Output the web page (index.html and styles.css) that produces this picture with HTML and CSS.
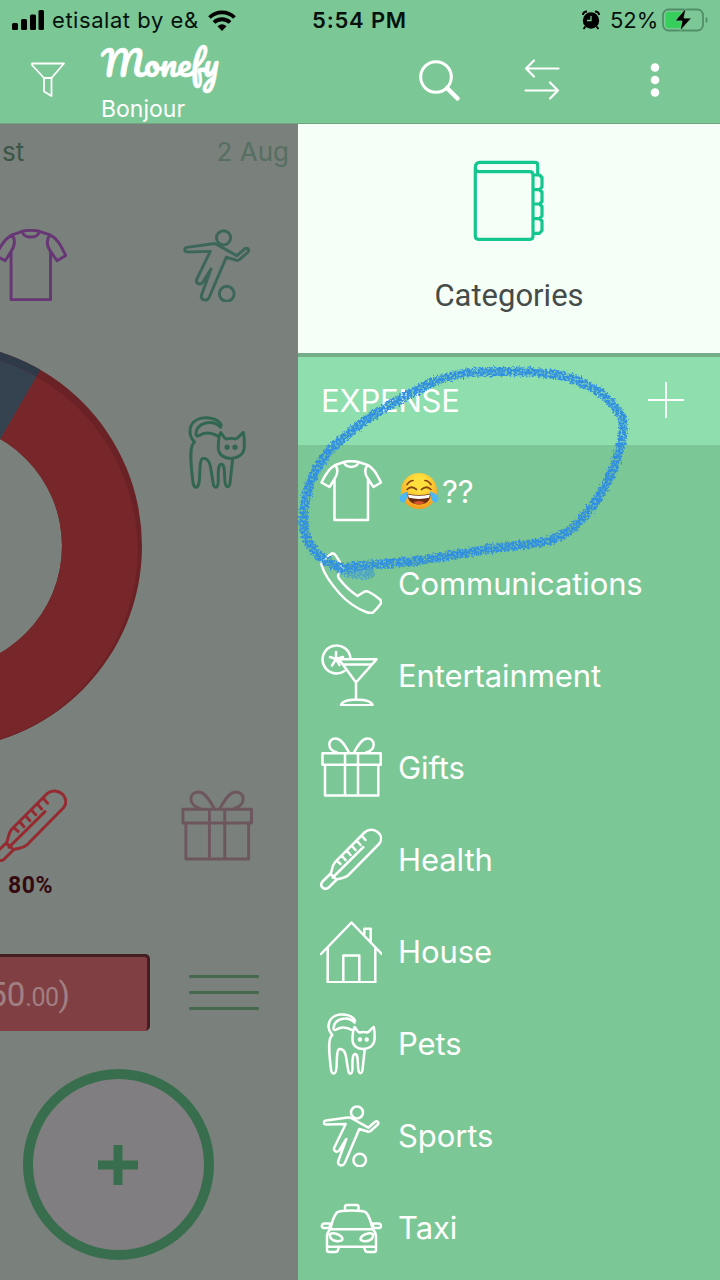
FILE: index.html
```html
<!DOCTYPE html>
<html lang="en">
<head>
<meta charset="utf-8">
<title>Monefy</title>
<link rel="stylesheet" href="styles.css">
</head>
<body>
<svg class="sprite" aria-hidden="true">
  <symbol id="shirt" viewBox="0 0 62 62">
    <path d="M24 2 15.500 5C9 8 5 15 1.500 22.500L9.500 27l5-8v41H48V19l5.500 8 7.500-4.500C57 15 54 8 47.500 5L38.500 2C34 1 28 1 24 2ZM24 2c1 6.500 13.500 6.500 14.500 0M15.500 5c2.500 4 2.500 9-1 14M47.500 5c-3 4-3 9 .5 14"/>
  </symbol>
  <symbol id="phone" viewBox="0 0 62 62">
    <path d="M11 2q2-1.500 4 .5 5 6.500 7.500 13 .5 2-1.500 3.500l-2.500 3.500q-1 2 .5 4Q27 37 37.500 44l5.500-3.500q3-2 6-.5 6 3 11 7.500 2 2 .5 4.500-3.500 5-7.500 8.500-3 1-7-.5Q31 54 20 42 5 25 1.500 13 1 10 3 8.500Z"/>
  </symbol>
  <symbol id="cocktail" viewBox="0 0 62 62">
    <path d="M30.500 14A14 14 0 1 0 24.500 27M16 8v6.500M16 15l-6-2M16 15l7-2M16 15l-4 6.500M16 15l3.500 6M19 15.300h37.500L36 38.500ZM23 20.500h29M36 38.500V55M21 61.200q1.500-5.200 15.500-5.600Q51 56 52.500 61.200Z"/>
  </symbol>
  <symbol id="gift" viewBox="0 0 62 62">
    <path d="M2.500 17.200h58.200v11.600H2.500ZM5 28.800v30.700h53.300V28.800M25 17.200v42.300M38 17.200v42.300M29 16.500C25 9 21 2.500 15.500 2.500 7.500 2.500 6.500 14 17 16.500M34 16.500C38 9 42 2.500 47.500 2.500 55.500 2.500 56.500 14 46 16.500"/>
  </symbol>
  <symbol id="thermo" viewBox="0 0 62 62">
    <path d="M45 4c8-7 21 3 14 12L28.300 47.200c-4 3.500-7 2.800-11.600 4.300l-8 8C4 63-1 58 2.500 53.500l8.200-8c2-4 .8-7 4.300-11.300ZM10.500 46l6 5.500M12.700 49.500 43.300 19.200M17 33l3.500 3M22 28l3.500 4M27 23l3.500 4M32 18l3.500 4M37 13l3.500 4M42 8l3.500 4"/>
  </symbol>
  <symbol id="house" viewBox="0 0 62 62">
    <path d="M1 33 31.500 1.500 61.700 33M7.700 27v34.200h47.600V27M23.300 61V34.500h16V61M44.300 13V7.800h6.400v13"/>
  </symbol>
  <symbol id="cat" viewBox="0 0 62 62">
    <path d="M35 7.500C31-1 8-2 8.500 14c.2 4 2 6 3.800 8.200-5 3-3 20-1.500 32.300.5 8 5 8 5.700 0 .5-7 0-18 3-18.500 7-.5 6.500 10 8.500 20 .5 6.500 4.300 6 4.500-.5 0-7-.5-14 2.500-14.500 3.500 0 2.500 8 3.200 14.500.5 6.500 4.300 6 4.500-.5l2-18.300M34.500 9.500C27 2 14 6 13.500 15c0 2 1 2.500 3 1.500 6-4 12-1.500 16.500 1M39.300 19.500C37 18.500 36.500 16 34.500 14c-2 4-2 8-2 13 0 12 21 12 22 0 .3-5 .5-9-.8-13-3 2-4 5-6.500 5.500q-3.500-1-7.900 0Z"/>
    <circle cx="40" cy="26.500" r="1"/><circle cx="46.700" cy="26.500" r="1"/>
  </symbol>
  <symbol id="sport" viewBox="0 0 62 62">
    <circle cx="37" cy="7.500" r="6"/><circle cx="39.700" cy="55" r="6.300"/>
    <path d="M6 15.600 28 12.500q2-.3 4 1L48.300 22.700 55 16.800c2.500-1.500 4.500 1 2.500 3L50.500 26q-1.500 1-3 .5l-8.200-2.500-14.500 34c-2 4-8 2.500-6.500-2l8-22-6.500 10.500c-2 4-7 2-5.500-2L25.700 19 6.500 19.500c-3.500 0-3-3.500-.5-3.900Z"/>
  </symbol>
  <symbol id="taxi" viewBox="0 0 62 62">
    <path d="M25 13.300V10q0-2 2-2h9.500q2 0 2 2v3.300M10.500 31.500C12 25 13.500 19 17 15.500q2-2 14.500-2t14.500 2C49.500 19 51 25 52.500 31.500M10 31H3.500c-3-1-1.500-4.500 1-4.500H10ZM53 31h6.500c3-1 1.500-4.500-1-4.500H53ZM10 32.300h43M10 32.300Q6.500 36 7 40v9.700h49V40q.5-4-3-7.700M7 49.700V53q0 2 2 2h6.500q2 0 2.500-2l1-3.300M56 49.700V53q0 2-2 2h-6.500q-2 0-2.500-2l-1-3.300M10 37c4-2 12 1 12.500 5 0 3-9 3-11.500-.5Q9.500 39 10 37ZM53 37c-4-2-12 1-12.500 5 0 3 9 3 11.500-.5Q53.500 39 53 37Z"/>
  </symbol>
</svg>

<div class="phone-screen">
  <div class="status">
    <svg class="signal" viewBox="0 0 32 20"><rect x="0" y="13" width="6" height="7" rx="1.500"/><rect x="9" y="9" width="6" height="11" rx="1.500"/><rect x="18" y="4.500" width="6" height="15.500" rx="1.500"/><rect x="26.500" y="0" width="5.500" height="20" rx="1.500"/></svg>
    <span class="carrier">etisalat by e&amp;</span>
    <svg class="wifi" viewBox="0 0 28 21"><path d="M1.500 7.500a18 18 0 0 1 25 0M6 12.500a11.500 11.500 0 0 1 16 0"/><path class="wifi-dot" d="M9.500 16.200q4.500-3.800 9 0L14 21Z"/></svg>
    <span class="time">5:54 PM</span>
    <svg class="alarm" viewBox="0 0 18 20"><path class="ear" d="M1 5Q1 1.500 5 1.500M17 5Q17 1.500 13 1.500M3.500 16.500 1.500 19M14.500 16.500l2 2.500"/><circle cx="9" cy="10.500" r="8.200"/><path class="hand" d="M9 6v4.500H5"/></svg>
    <span class="percent">52%</span>
    <svg class="battery" viewBox="0 0 46 24"><rect class="shell" x="1" y="1.500" width="40" height="21" rx="5.500"/><path class="charge" d="M6.500 4H19v16H6.500Q3.500 20 3.500 17V7Q3.500 4 6.500 4Z"/><path class="shell" d="M44.500 9.500v5"/><path class="bolt" d="M24 0 13 13h7l-2 10L29.500 10H22Z"/></svg>
  </div>

  <header class="toolbar">
    <svg class="funnel" viewBox="0 0 34 36"><path d="M1 1.500h32L20.500 16v18L13 29.500V16L1 3ZM13 16h7.500"/></svg>
    <div class="brand">
      <div class="logo">Monefy</div>
      <div class="account">Bonjour</div>
    </div>
    <svg class="search" viewBox="0 0 42 42"><circle cx="17" cy="17" r="15.300"/><path d="m28 28 10.500 10.500"/></svg>
    <svg class="swap" viewBox="0 0 36 42"><path d="M34.500 9.500H2M10 1.500 2 9.500l8 8M1.500 31.500H34M26 23.500l8 8-8 8"/></svg>
    <svg class="more" viewBox="0 0 10 34"><circle cx="5" cy="4.500" r="4.300"/><circle cx="5" cy="17" r="4.300"/><circle cx="5" cy="29.500" r="4.300"/></svg>
  </header>

  <main class="content">
    <section class="overview">
      <svg class="donut" viewBox="0 0 298 410">
        <defs>
          <clipPath id="ring"><path clip-rule="evenodd" d="M-265 206a203.500 203.500 0 0 1 407 0a203.500 203.500 0 0 1-407 0ZM-185 206a123.500 123.500 0 0 0 247 0a123.500 123.500 0 0 0-247 0Z"/></clipPath>
          <clipPath id="face"><circle cx="-61.500" cy="210" r="199"/></clipPath>
        </defs>
        <g clip-path="url(#ring)">
          <path class="red-rim" d="M0 0h298v410H0Z"/><path class="blue-rim" d="M-61.500 206 61 -6H0Z"/>
          <g clip-path="url(#face)"><path class="red" d="M0 0h298v410H0Z"/><path class="blue" d="M-61.500 206 61 -6H0Z"/></g>
        </g>
      </svg>
      <div class="dates"><span>st</span><span class="next">2 Aug</span></div>
      <div class="tiles first">
        <svg class="tile purple"><use href="#shirt"/></svg>
        <svg class="tile teal"><use href="#sport"/></svg>
      </div>
      <div class="tiles second">
        <svg class="tile green"><use href="#cat"/></svg>
      </div>
      <div class="tiles third">
        <svg class="tile crimson"><use href="#thermo"/></svg>
        <svg class="tile mauve"><use href="#gift"/></svg>
      </div>
      <div class="share">80%</div>
      <div class="balance-row">
        <div class="balance">50<small>.00</small>)</div>
        <div class="lines"><i></i><i></i><i></i></div>
      </div>
      <div class="add"><svg viewBox="0 0 40 40"><path d="M20 0v40M0 20h40"/></svg></div>
    </section>

    <aside class="drawer">
      <div class="categories">
        <svg class="book" viewBox="0 0 72 82"><path d="M2.300 8V76q0 3.300 3.300 3.300H57q3 0 3-3.300V15q0-3.300-3.300-3.300H7Q2.300 11.700 2.300 8 2.300 2.300 7 2.300H62q2.700 0 2.700 2.700v9.500M60 15h6.500l2.500 2.500v9.500l-2.500 2.700H60M66.500 29.700 69 32v9.500L66.500 44H60M66.500 44l2.500 2.500V56l-2.500 2.700H60M66.500 58.700 69 61v9.500l-2.500 2.800H60"/></svg>
        <div class="categories-label">Categories</div>
      </div>
      <div class="section-head">
        <span>EXPENSE</span>
        <svg class="plus" viewBox="0 0 38 38"><path d="M19 1v36M1 19h36"/></svg>
      </div>
      <ul class="list">
        <li><svg class="icon"><use href="#shirt"/></svg>
          <svg class="joy" viewBox="0 0 40 40" role="img" aria-label="Face with tears of joy">
            <defs><radialGradient id="skin" cx=".5" cy=".3" r=".7"><stop offset=".3" stop-color="#ffdf3d"/><stop offset="1" stop-color="#f79a1c"/></radialGradient></defs>
            <circle cx="20" cy="20" r="18" fill="url(#skin)"/>
            <path d="M8 22.500q12 3 24 0Q31 33.500 20 33.500T8 22.500Z" fill="#6b2d10"/><path d="M9 23.500q11 2.700 22 0l-.8 3.300q-10.200 2.200-20.400 0Z" fill="#fff"/>
            <path d="M14 31.800q6-3.500 12 0-6 3-12 0Z" fill="#d9552f"/>
            <path d="M8 18.500q4.500-4.500 9.500 0M22.500 18.500q5-4.500 9.500 0M8 13.500q3-4 6-4M26 9.500q3 0 6 4" fill="none" stroke="#85450f" stroke-width="1.700" stroke-linecap="round"/>
            <path d="M9 20.500q-8 2-8.500 7 .5 5 5 3.500Q8.500 29 9 20.500ZM31 20.500q8 2 8.500 7-.5 5-5 3.500Q31.500 29 31 20.500Z" fill="#4db8f2"/>
          </svg><span>??</span></li>
        <li><svg class="icon"><use href="#phone"/></svg><span>Communications</span></li>
        <li><svg class="icon"><use href="#cocktail"/></svg><span>Entertainment</span></li>
        <li><svg class="icon"><use href="#gift"/></svg><span>Gifts</span></li>
        <li><svg class="icon"><use href="#thermo"/></svg><span>Health</span></li>
        <li><svg class="icon"><use href="#house"/></svg><span>House</span></li>
        <li><svg class="icon"><use href="#cat"/></svg><span>Pets</span></li>
        <li><svg class="icon"><use href="#sport"/></svg><span>Sports</span></li>
        <li><svg class="icon"><use href="#taxi"/></svg><span>Taxi</span></li>
      </ul>
    </aside>
  </main>

  <svg class="scribble" viewBox="298 350 422 250">
    <defs>
      <filter id="crayon" x="-5%" y="-5%" width="110%" height="110%" color-interpolation-filters="sRGB">
        <feTurbulence type="fractalNoise" baseFrequency=".45" numOctaves="2" seed="4" result="n"/>
        <feDisplacementMap in="SourceGraphic" in2="n" scale="7" xChannelSelector="R" yChannelSelector="G" result="d"/>
        <feColorMatrix in="n" type="matrix" values="0 0 0 0 0  0 0 0 0 0  0 0 0 0 0  0 0 3 0 -.6" result="m"/>
        <feComposite in="d" in2="m" operator="in"/>
        <feGaussianBlur stdDeviation=".45"/>
      </filter>
    </defs>
    <g filter="url(#crayon)">
      <path d="M343 568C322 561 305 548 303 525C301 495 312 468 331 447C352 426 385 405 418 388C438 377 455 372 480 371C505 370 527 370 551 373C585 378 609 396 619 413C626 425 620 445 614 463C609 479 587 518 565 532C550 540 542 542 520 544C480 548 450 555 420 559C395 563 370 563 343 567"/>
      <path class="smudge" d="M341 569Q352 575 370 573"/>
    </g>
  </svg>
</div>
</body>
</html>
```
FILE: styles.css
```css
* { box-sizing: border-box; }
body { margin: 0; font-family: Inter, "Liberation Sans", sans-serif; }
svg { display: block; fill: none; flex: none; overflow: visible; }
.sprite { position: absolute; width: 0; height: 0; overflow: hidden; }
.phone-screen { position: relative; width: 720px; height: 1280px; overflow: hidden; display: flex; flex-direction: column; background: #7cc796; }

.status { height: 40px; padding-left: 12px; display: flex; align-items: center; color: #06120b; font-size: 21px; white-space: nowrap; }
.status svg { fill: #000; }
.signal { width: 32px; height: 20px; }
.carrier { width: 147px; margin-left: 8px; letter-spacing: .55px; font-size: 22px; line-height: 24px; }
.status .wifi { width: 28px; height: 21px; margin-left: 9px; fill: none; stroke: #000; stroke-width: 3.800; }
.wifi .wifi-dot { fill: #000; stroke: none; }
.time { width: 95px; margin-left: 76px; font-weight: 600; font-size: 22px; letter-spacing: .8px; }
.alarm { width: 18px; height: 20px; margin-left: 175px; }
.alarm circle { fill: #000; }
.alarm .ear { fill: none; stroke: #000; stroke-width: 2; }
.alarm .hand { fill: none; stroke: #7cc796; stroke-width: 1.300; }
.percent { width: 48px; margin-left: 10px; font-size: 22px; }
.battery { width: 46px; height: 24px; margin-left: 4px; }
.battery .shell { fill: none; stroke: #508f66; stroke-width: 1.800; }
.battery .charge { fill: #36cf5c; }
.battery .bolt { stroke: #7cc796; stroke-width: .8; }

.toolbar { height: 84px; display: flex; align-items: flex-start; padding-left: 31px; border-bottom: 1px solid #6fa581; color: #fff; }
.toolbar svg { stroke: #fff; stroke-linecap: round; stroke-linejoin: round; }
.funnel { width: 34px; height: 36px; margin-top: 22px; stroke-width: 1.800; }
.brand { width: 300px; margin-left: 36px; }
.logo { width: 130px; height: 55px; font: 35px/44px "Pacifico", cursive, serif; letter-spacing: 0; -webkit-text-stroke: .5px #fff; }
.account { font-size: 23px; line-height: 28px; }
.search { width: 42px; height: 42px; margin: 20px 0 0 18px; stroke-width: 3; }
.search path { stroke-width: 4.500; }
.swap { width: 36px; height: 42px; margin: 19px 0 0 63px; stroke-width: 2.200; }
.more { width: 10px; height: 34px; margin: 23px 0 0 90px; }
.toolbar .more { fill: #fff; stroke: none; }

.content { flex: 1; display: grid; grid-template-columns: 298px 422px; }
.overview { position: relative; overflow: hidden; background: #7a807b; }
.donut { position: absolute; left: 0; top: 216px; width: 298px; height: 410px; }
.red { fill: #772729; } .red-rim { fill: #6a2226; }
.blue { fill: #354351; } .blue-rim { fill: #2f3a48; }
.dates { position: relative; height: 105px; padding: 12px 9px 0 2px; display: flex; justify-content: space-between; font-size: 26px; line-height: 32px; color: #3a5746; }
.next { color: #566f61; }
.tiles { position: relative; display: flex; justify-content: space-between; width: 259px; margin-left: -6px; }
.tile { width: 73px; height: 73px; stroke-width: 2.500; stroke-linejoin: round; stroke-linecap: round; }
.second { justify-content: flex-end; margin-top: 114px; }
.third { margin-top: 300px; }
.purple { stroke: #673775; } .teal { stroke: #3c665a; } .green { stroke: #316650; }
.crimson { stroke: #952a30; } .mauve { stroke: #6e565f; }
.share { width: 61px; margin-top: 10px; font: bold 23px/28px Roboto, sans-serif; letter-spacing: .6px; text-align: center; color: #340a10; }
.balance-row { margin-top: 54px; display: flex; align-items: center; gap: 39px; }
.balance { width: 150px; height: 77px; padding-right: 77px; display: flex; justify-content: flex-end; align-items: baseline; line-height: 76px; font-family: Roboto, sans-serif; font-size: 33px; color: #a08083; background: #803f42; border: solid #431d20; border-width: 3px 3px 0 0; border-radius: 0 5px 5px 0; }
.balance small { font-size: 25px; letter-spacing: -.5px; }
.lines { display: flex; flex-direction: column; gap: 13px; width: 70px; }
.lines i { height: 3px; background: #47694f; border-radius: 1px; }
.add { width: 191px; height: 191px; margin: 38px 0 0 22.500px; border: 10.500px solid #386e4d; border-radius: 50%; background: #807e80; display: grid; place-items: center; }
.add svg { width: 40px; height: 40px; stroke: #386e4d; stroke-width: 9; }

.drawer { background: #7cc796; color: #fff; }
.categories { height: 233px; padding-top: 36px; display: flex; flex-direction: column; align-items: center; background: #f5fff8; border-bottom: 4px solid #76ae89; }
.book { width: 72px; height: 82px; stroke: #15c78f; stroke-width: 3.200; stroke-linejoin: round; }
.categories-label { margin-top: 34px; font: 31px/40px Roboto, sans-serif; letter-spacing: 0; color: #454b48; }
.section-head { height: 88px; padding: 0 35px 2px 23px; display: flex; align-items: center; justify-content: space-between; background: #8fdeae; font-size: 31px; letter-spacing: -.2px; }
.plus { width: 38px; height: 38px; stroke: #fff; stroke-width: 1.800; }
.list { list-style: none; margin: 0; padding: 0; }
.list li { height: 92.100px; padding-left: 22px; display: flex; align-items: center; font-size: 31px; letter-spacing: -.1px; }
.icon { width: 62px; height: 62px; margin-right: 16px; stroke: #fff; stroke-width: 2.500; stroke-linejoin: round; stroke-linecap: round; }
.joy { width: 40px; height: 40px; margin: 0 3px 0 1px; }

.scribble { position: absolute; left: 298.500px; top: 350.500px; width: 422px; height: 250px; stroke: #318fe0; stroke-width: 9; stroke-linecap: round; stroke-linejoin: round; }
.smudge { stroke-width: 9; opacity: .6; }
```
